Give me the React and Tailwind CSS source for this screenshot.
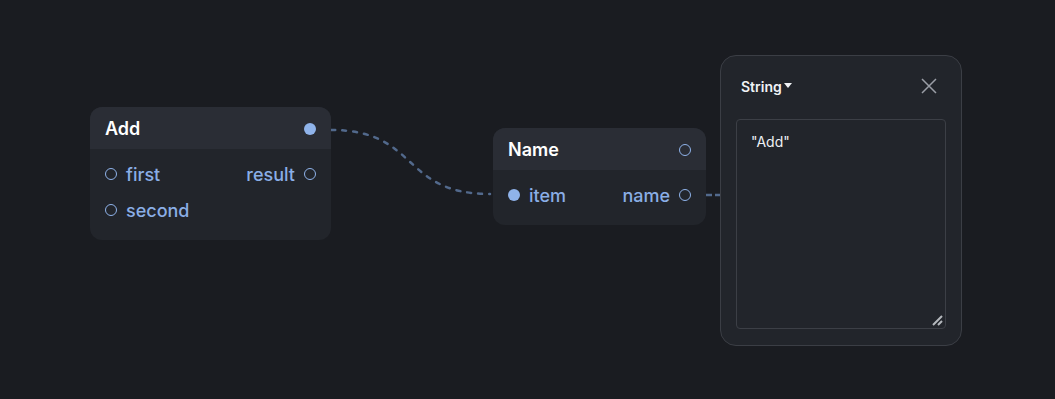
import React from "react";

function Port({ filled }) {
  return filled ? (
    <span className="block w-[12px] h-[12px] rounded-full bg-[#8fb3ea]" />
  ) : (
    <span className="block w-[12px] h-[12px] rounded-full border-[1.75px] border-[#8fb3ea]" />
  );
}

export default function App() {
  return (
    <div
      className="relative w-[1055px] h-[399px] bg-[#1a1c21] overflow-hidden"
      style={{ fontFamily: "Inter, 'Noto Sans', sans-serif" }}
    >
      <svg className="absolute left-0 top-0" width="1055" height="399">
        <path
          d="M331 130 C 420 130, 400 194, 490 194"
          fill="none"
          stroke="#52698c"
          strokeWidth="2.5"
          strokeDasharray="4 7"
          strokeLinecap="round"
        />
        <path d="M706 195 L 720 195" stroke="#52698c" strokeWidth="2.5" strokeDasharray="6 3" />
      </svg>

      {/* Add node */}
      <div className="absolute left-[90px] top-[107px] w-[241px] h-[133px] rounded-[12px] overflow-hidden bg-[#22252b]">
        <div className="h-[42px] bg-[#2a2d35] flex items-center justify-between pl-[15px] pr-[15px]">
          <span className="text-[18px] font-semibold text-white">Add</span>
          <span className="mt-[1px]"><Port filled /></span>
        </div>
        <div className="pt-[7px]">
          <div className="h-[36px] flex items-center justify-between pl-[15px] pr-[15px]">
            <div className="flex items-center gap-[9px]">
              <Port />
              <span className="text-[18px] font-medium text-[#8aaee6]">first</span>
            </div>
            <div className="flex items-center gap-[9px]">
              <span className="text-[18px] font-medium text-[#8aaee6]">result</span>
              <Port />
            </div>
          </div>
          <div className="h-[36px] flex items-center pl-[15px]">
            <div className="flex items-center gap-[9px]">
              <Port />
              <span className="text-[18px] font-medium text-[#8aaee6]">second</span>
            </div>
          </div>
        </div>
      </div>

      {/* Name node */}
      <div className="absolute left-[493px] top-[128px] w-[213px] h-[97px] rounded-[12px] overflow-hidden bg-[#22252b]">
        <div className="h-[42px] bg-[#2a2d35] flex items-center justify-between pl-[15px] pr-[15px]">
          <span className="text-[18px] font-semibold text-white">Name</span>
          <span className="mt-[1px]"><Port /></span>
        </div>
        <div className="pt-[7px]">
          <div className="h-[36px] flex items-center justify-between pl-[15px] pr-[15px]">
            <div className="flex items-center gap-[9px]">
              <Port filled />
              <span className="text-[18px] font-medium text-[#8aaee6]">item</span>
            </div>
            <div className="flex items-center gap-[9px]">
              <span className="text-[18px] font-medium text-[#8aaee6]">name</span>
              <Port />
            </div>
          </div>
        </div>
      </div>

      {/* Panel */}
      <div className="absolute left-[720px] top-[55px] w-[242px] h-[291px] rounded-[16px] border border-[#3b3e45] bg-[#22252b] px-[15px] pt-[19px] pb-[16px] flex flex-col">
        <div className="h-[22px] flex items-center justify-between pl-[5px] pr-[8px]">
          <div className="flex items-center gap-[2px] text-[14px] font-semibold text-[#f1f3f6]">
            <span>String</span>
            <svg width="8" height="6" viewBox="0 0 8 6">
              <path d="M0 0 L8 0 L4 5 Z" fill="#f1f3f6" />
            </svg>
          </div>
          <svg width="18" height="18" viewBox="0 0 18 18">
            <path d="M2 2 L16 16 M16 2 L2 16" stroke="#9a9ea6" strokeWidth="1.5" />
          </svg>
        </div>
        <div className="mt-[22px] relative w-[210px] h-[210px] rounded-[4px] border border-[#3c3f46] bg-[#22252b] px-[14px] pt-[11px] text-[14px] text-[#eef0f3]">
          "Add"
          <svg className="absolute right-[2px] bottom-[2px]" width="11" height="11" viewBox="0 0 11 11">
            <path d="M1 10 L10 1 M6 10 L10 6" stroke="#b5b8bd" strokeWidth="2" />
          </svg>
        </div>
      </div>
    </div>
  );
}
